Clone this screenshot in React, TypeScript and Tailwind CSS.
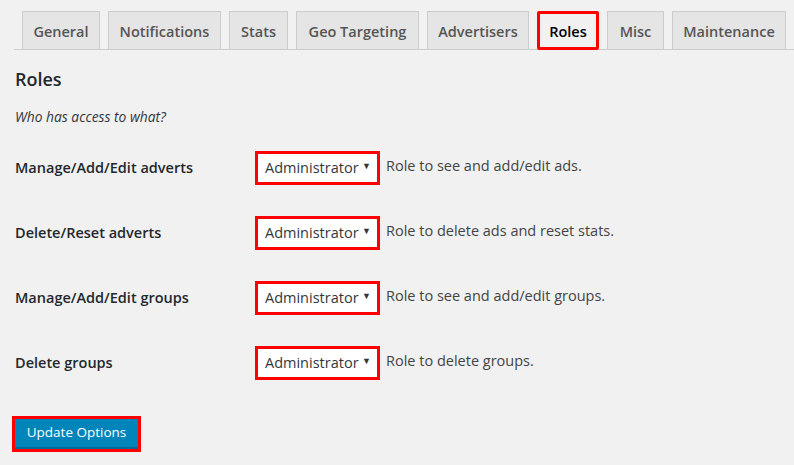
import React from "react";

const tabs = [
  { label: "General", w: "w-[78px]" },
  { label: "Notifications", w: "w-[113px]" },
  { label: "Stats", w: "w-[59px]" },
  { label: "Geo Targeting", w: "w-[123px]" },
  { label: "Advertisers", w: "w-[102px]" },
  { label: "Roles", w: "w-[62px]", active: true },
  { label: "Misc", w: "w-[57px]" },
  { label: "Maintenance", w: "w-[114px]" },
];

const rows = [
  { label: "Manage/Add/Edit adverts", desc: "Role to see and add/edit ads." },
  { label: "Delete/Reset adverts", desc: "Role to delete ads and reset stats." },
  { label: "Manage/Add/Edit groups", desc: "Role to see and add/edit groups." },
  { label: "Delete groups", desc: "Role to delete groups." },
];

export default function App() {
  return (
    <div
      className="w-[794px] h-[465px] bg-[#f1f1f1] overflow-hidden text-[#23282d]"
      style={{ fontFamily: '"Open Sans", "Liberation Sans", sans-serif' }}
    >
      <div className="ml-[14px] pt-[11px] border-b border-[#cccccc] flex gap-[8px] pl-[8px] h-[50px]">
        {tabs.map((t) =>
          t.active ? (
            <div
              key={t.label}
              className={`${t.w} h-[39px] border-[3px] border-[#ff0000] rounded-[2px] bg-[#f1f1f1] flex items-center justify-center pt-[2px] text-[14.5px] font-semibold text-black`}
            >
              {t.label}
            </div>
          ) : (
            <div
              key={t.label}
              className={`${t.w} h-[38px] border border-b-0 border-[#cccccc] bg-[#e5e5e5] flex items-center justify-center pt-[2px] text-[14.5px] font-semibold text-[#555555]`}
            >
              {t.label}
            </div>
          )
        )}
      </div>

      <div className="pl-[15px]">
        <h2 className="mt-[16px] text-[18px] leading-[26px] font-semibold text-[#23282d]">Roles</h2>
        <p className="mt-[16px] text-[13.8px] italic leading-[18px] text-[#32373c]">Who has access to what?</p>

        <div className="mt-[9px] flex flex-col">
          {rows.map((r) => (
            <div key={r.label} className="h-[65px] flex items-center">
              <div className="w-[240px] text-[14.5px] font-semibold text-[#23282d]">{r.label}</div>
              <div className="w-[125px] h-[34px] border-[3px] border-[#ff0000] bg-white flex items-center justify-between pl-[7px] pr-[6px]">
                <span className="text-[14.5px] text-[#32373c]">Administrator</span>
                <span className="text-[9px] text-[#32373c] -mt-[3px]">▼</span>
              </div>
              <div className="ml-[6px] text-[14.5px] text-[#444444] -mt-[4px]">{r.desc}</div>
            </div>
          ))}
        </div>

        <div className="mt-[21px] -ml-[3px] w-[129px] h-[36px] border-[3px] border-[#ff0000] flex">
          <button className="w-full h-full bg-[#0085ba] border-b-2 border-[#006799] text-white text-[13.5px] leading-none flex items-center justify-center">
            Update Options
          </button>
        </div>
      </div>
    </div>
  );
}
